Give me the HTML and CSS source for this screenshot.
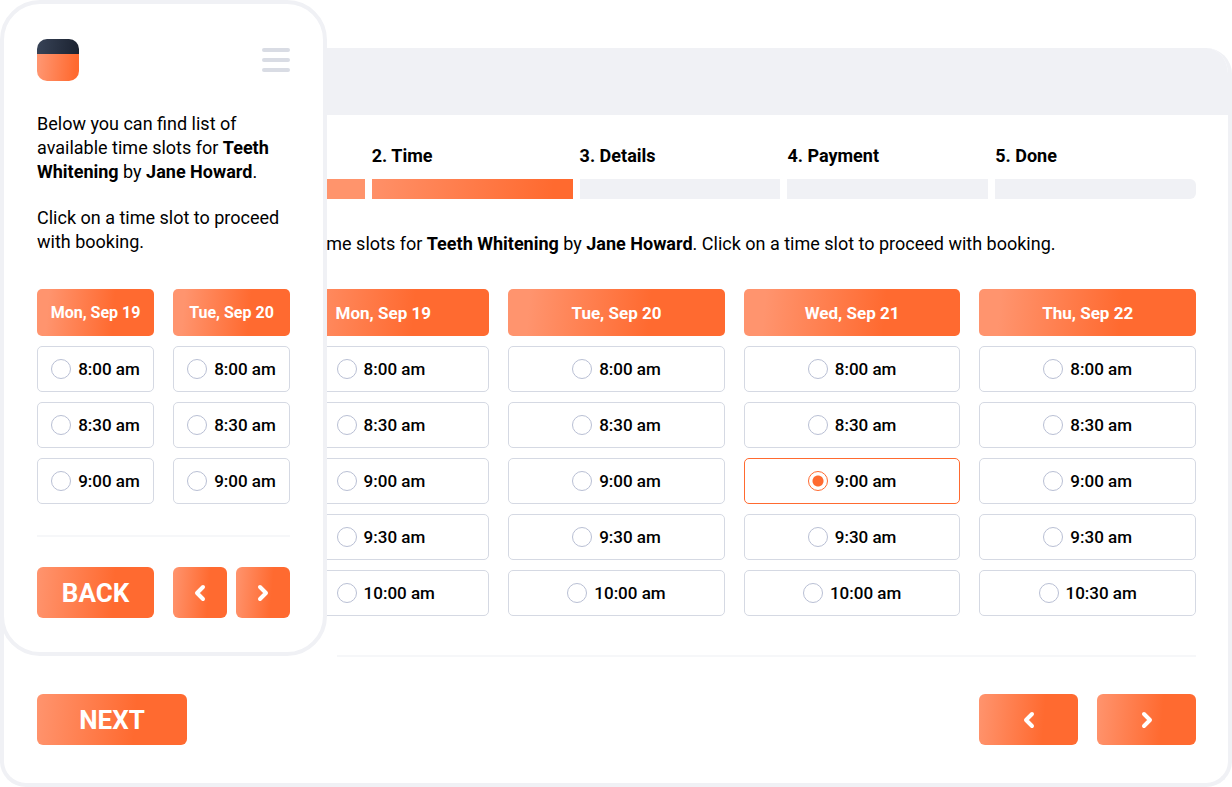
FILE: index.html
```html
<!DOCTYPE html>
<html lang="en">
<head>
    <meta charset="UTF-8">
    <meta name="viewport" content="width=device-width, initial-scale=1.0">
    <title>Booking - Time</title>
    <link rel="stylesheet" href="styles.css">
</head>
<body>
    <div class="stage">
        <!-- Desktop window -->
        <main class="window">
            <div class="window-bar"></div>
            <form class="window-body">
                <ol class="steps">
                    <li class="step done"></li>
                    <li class="step active">2. Time</li>
                    <li class="step">3. Details</li>
                    <li class="step">4. Payment</li>
                    <li class="step">5. Done</li>
                </ol>
                <p class="intro">Below you can find list of available time slots for <b>Teeth Whitening</b> by <b>Jane Howard</b>. Click on a time slot to proceed with booking.</p>
                <div class="days days-desktop">
                    <div class="day"></div>
                    <div class="day day-start">
                        <div class="day-name">Mon, Sep 19</div>
                        <label class="slot"><input type="radio" name="slot">8:00 am</label>
                        <label class="slot"><input type="radio" name="slot">8:30 am</label>
                        <label class="slot"><input type="radio" name="slot">9:00 am</label>
                        <label class="slot"><input type="radio" name="slot">9:30 am</label>
                        <label class="slot"><input type="radio" name="slot">10:00 am</label>
                    </div>
                    <div class="day">
                        <div class="day-name">Tue, Sep 20</div>
                        <label class="slot"><input type="radio" name="slot">8:00 am</label>
                        <label class="slot"><input type="radio" name="slot">8:30 am</label>
                        <label class="slot"><input type="radio" name="slot">9:00 am</label>
                        <label class="slot"><input type="radio" name="slot">9:30 am</label>
                        <label class="slot"><input type="radio" name="slot">10:00 am</label>
                    </div>
                    <div class="day">
                        <div class="day-name">Wed, Sep 21</div>
                        <label class="slot"><input type="radio" name="slot">8:00 am</label>
                        <label class="slot"><input type="radio" name="slot">8:30 am</label>
                        <label class="slot"><input type="radio" name="slot" checked>9:00 am</label>
                        <label class="slot"><input type="radio" name="slot">9:30 am</label>
                        <label class="slot"><input type="radio" name="slot">10:00 am</label>
                    </div>
                    <div class="day">
                        <div class="day-name">Thu, Sep 22</div>
                        <label class="slot"><input type="radio" name="slot">8:00 am</label>
                        <label class="slot"><input type="radio" name="slot">8:30 am</label>
                        <label class="slot"><input type="radio" name="slot">9:00 am</label>
                        <label class="slot"><input type="radio" name="slot">9:30 am</label>
                        <label class="slot"><input type="radio" name="slot">10:30 am</label>
                    </div>
                </div>
                <hr class="line line-desktop">
                <div class="window-actions">
                    <button type="submit" class="btn btn-next">NEXT</button>
                    <div class="pager">
                        <button type="button" class="btn" aria-label="Previous days">
                            <svg width="12" height="18" viewBox="0 0 12 18"><path d="M9 3 3 9l6 6"/></svg>
                        </button>
                        <button type="button" class="btn" aria-label="Next days">
                            <svg width="12" height="18" viewBox="0 0 12 18"><path d="m3 3 6 6-6 6"/></svg>
                        </button>
                    </div>
                </div>
            </form>
        </main>

        <!-- Phone -->
        <section class="phone">
            <header class="phone-header">
                <div class="logo"></div>
                <button type="button" class="menu" aria-label="Menu">
                    <span></span><span></span><span></span>
                </button>
            </header>
            <div class="phone-text">
                <p>Below you can find list of available time slots for <b>Teeth Whitening</b> by <b>Jane Howard</b>.</p>
                <p>Click on a time slot to proceed with booking.</p>
            </div>
            <form>
                <div class="days days-phone">
                    <div class="day">
                        <div class="day-name">Mon, Sep 19</div>
                        <label class="slot"><input type="radio" name="slot">8:00 am</label>
                        <label class="slot"><input type="radio" name="slot">8:30 am</label>
                        <label class="slot"><input type="radio" name="slot">9:00 am</label>
                    </div>
                    <div class="day">
                        <div class="day-name">Tue, Sep 20</div>
                        <label class="slot"><input type="radio" name="slot">8:00 am</label>
                        <label class="slot"><input type="radio" name="slot">8:30 am</label>
                        <label class="slot"><input type="radio" name="slot">9:00 am</label>
                    </div>
                </div>
                <hr class="line line-phone">
                <div class="phone-actions">
                    <button type="button" class="btn">BACK</button>
                    <div class="phone-pager">
                        <button type="button" class="btn" aria-label="Previous days">
                            <svg width="12" height="18" viewBox="0 0 12 18"><path d="M9 3 3 9l6 6"/></svg>
                        </button>
                        <button type="button" class="btn" aria-label="Next days">
                            <svg width="12" height="18" viewBox="0 0 12 18"><path d="m3 3 6 6-6 6"/></svg>
                        </button>
                    </div>
                </div>
            </form>
        </section>
    </div>
</body>
</html>
```
FILE: styles.css
```css
* {
    box-sizing: border-box;
}

body {
    margin: 0;
    background: #fff;
    color: #000;
    font-family: Roboto, sans-serif;
    font-size: 18px;
    line-height: 24px;
}

p {
    margin: 0;
}

b {
    font-weight: 700;
}

.stage {
    position: relative;
    padding-top: 48px;
}

/* Desktop window */
.window {
    border: 4px solid #f0f1f5;
    border-top: none;
    border-radius: 26px;
    overflow: hidden;
}

.window-bar {
    height: 67px;
    background: #f0f1f5;
}

.window-body {
    padding: 29px 32px 38px 33px;
}

.steps {
    display: flex;
    gap: 7px;
    margin: 0 0 33px 127px;
    padding: 0;
    list-style: none;
    font-weight: 700;
}

.step {
    flex: 1;
    display: flex;
    flex-direction: column;
    justify-content: flex-end;
    height: 55px;
    gap: 11px;
}

.step::after {
    content: "";
    height: 20px;
    background: #f0f1f5;
}

.step:last-child::after {
    border-radius: 0 6px 6px 0;
}

.step.done::after {
    background: #ff946c;
}

.step.active::after {
    background: linear-gradient(95deg, #ff9068, #ff6a2f 90%);
}

.intro {
    margin-bottom: 33px;
    white-space: nowrap;
}

/* Day columns */
.days {
    display: grid;
    gap: 19px;
}

.days-desktop {
    grid-template-columns: repeat(5, 1fr);
}

.days-phone {
    grid-template-columns: repeat(2, 1fr);
}

.day {
    display: flex;
    flex-direction: column;
    gap: 10px;
}

.day-name, .slot {
    display: flex;
    align-items: center;
    justify-content: center;
    border-radius: 5px;
    font-size: 17px;
    white-space: nowrap;
}

.day-name {
    height: 47px;
    background: linear-gradient(95deg, #ff946e 10%, #ff6a30 65%);
    color: #fff;
    font-weight: 700;
}

.days-phone .day-name {
    font-size: 16px;
}

.slot {
    gap: 7px;
    height: 46px;
    border: 1px solid #d5d9e3;
    font-weight: 500;
    cursor: pointer;
}

.day-start .day-name, .day-start .slot {
    justify-content: flex-start;
    padding-left: 63px;
}

.slot input {
    appearance: none;
    width: 20px;
    height: 20px;
    margin: 0;
    border: 1px solid #b9bfd4;
    border-radius: 50%;
}

.slot input:checked {
    border-color: #ff6a30;
    background: radial-gradient(circle, #ff6a30 5px, #fff 6px);
}

.slot:has(input:checked) {
    border-color: #ff6a30;
}

.line {
    height: 2px;
    border: none;
    background: #f6f7f9;
}

.line-desktop {
    margin: 39px 0 37px 300px;
}

.line-phone {
    margin: 31px 0 30px;
}

/* Buttons */
.btn {
    display: flex;
    align-items: center;
    justify-content: center;
    height: 51px;
    padding: 0;
    border: none;
    border-radius: 6px;
    background: linear-gradient(95deg, #ff946e, #ff6a30 65%);
    color: #fff;
    font-family: inherit;
    font-size: 26px;
    font-weight: 700;
    cursor: pointer;
}

.btn svg {
    fill: none;
    stroke: #fff;
    stroke-width: 4;
    stroke-linecap: round;
    stroke-linejoin: round;
}

.btn-next {
    width: 150px;
}

.window-actions {
    display: flex;
    justify-content: space-between;
}

.pager {
    display: flex;
    gap: 19px;
}

.pager .btn {
    width: 99px;
}

/* Phone, lies over the desktop window */
.phone {
    position: absolute;
    top: 0;
    left: 0;
    width: 327px;
    padding: 35px 33px 34px;
    border: 4px solid #f0f1f5;
    border-radius: 40px;
    background: #fff;
}

.phone-header {
    display: flex;
    align-items: center;
    justify-content: space-between;
    margin-bottom: 31px;
}

.logo {
    width: 42px;
    height: 42px;
    border-radius: 10px;
    background:
        linear-gradient(95deg, #384357, #1b2230) top / 100% 15px no-repeat,
        linear-gradient(95deg, #ff946e 10%, #ff6a30 90%);
}

.menu {
    display: flex;
    flex-direction: column;
    gap: 6px;
    width: 28px;
    padding: 0;
    border: none;
    background: none;
    cursor: pointer;
}

.menu span {
    height: 4px;
    border-radius: 2px;
    background: #d9dce4;
}

.phone-text {
    display: flex;
    flex-direction: column;
    gap: 22px;
    margin-bottom: 35px;
}

.phone-actions {
    display: grid;
    grid-template-columns: 1fr 1fr;
    gap: 19px;
}

.phone-pager {
    display: grid;
    grid-template-columns: 1fr 1fr;
    gap: 9px;
}
```
